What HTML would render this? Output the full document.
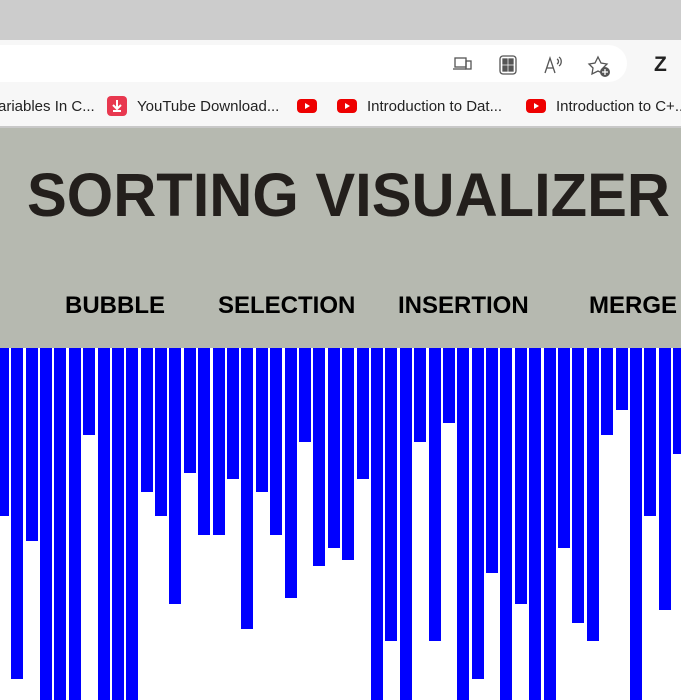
<!DOCTYPE html>
<html><head><style>
*{margin:0;padding:0;box-sizing:border-box}
body{width:681px;height:681px;overflow:hidden;background:#fff;position:relative;font-family:"Liberation Sans",Arial,sans-serif}
.a{position:absolute}
.bar{position:absolute;top:348px;width:12px;background:#0000ff}
.bm{position:absolute;top:98px;font-size:15px;color:#222;white-space:nowrap}
.yt{position:absolute;top:99px;width:20px;height:14px;background:#e00;border-radius:4px}
.yt:after{content:"";position:absolute;left:8px;top:4px;border-left:5px solid #fff;border-top:3px solid transparent;border-bottom:3px solid transparent}
.btn{position:absolute;top:292px;font-size:24px;font-weight:bold;color:#000;white-space:nowrap}
</style></head><body>
<div class="a" style="left:0;top:0;width:681px;height:40px;background:#cccccc"></div>
<div class="a" style="left:0;top:40px;width:681px;height:87px;background:#f7f7f7"></div>
<div class="a" style="left:-30px;top:45px;width:657px;height:37px;background:#fff;border-radius:19px"></div>
<svg class="a" style="left:452px;top:54px" width="160" height="24" viewBox="0 0 160 24">
 <g fill="none" stroke="#555" stroke-width="1.3">
  <rect x="3" y="4" width="11" height="9"/><path d="M1 15h13"/><rect x="14" y="7" width="5" height="8"/>
  <rect x="48" y="2" width="16" height="18" rx="3"/><rect x="51" y="5" width="4" height="5" fill="#555"/><rect x="57" y="5" width="4" height="5" fill="#555"/><rect x="51" y="12" width="4" height="5" fill="#555"/><rect x="57" y="12" width="4" height="5" fill="#555"/>
  <path d="M93 19l5-15l5 15M95 14h6M105 5c2 1 2 4 0 5M107 3c3 2 3 7 0 9"/>
  <path d="M146 3l3 6l6 1l-4 4l1 6l-6-3l-6 3l1-6l-4-4l6-1z"/>
 </g>
 <circle cx="153" cy="18" r="5" fill="#555"/><path d="M153 15v6M150 18h6" stroke="#fff" stroke-width="1.3"/>
</svg>
<div class="a" style="left:654px;top:53px;font-size:21px;font-weight:bold;color:#222">Z</div>
<div class="bm" style="left:-2px">ariables In C...</div>
<div class="a" style="left:107px;top:96px;width:20px;height:20px;background:#e8384f;border-radius:4px"></div>
<svg class="a" style="left:107px;top:96px" width="20" height="20"><path d="M10 4v8M6 9l4 4l4-4M6 15h8" stroke="#fff" stroke-width="2" fill="none"/></svg>
<div class="bm" style="left:137px">YouTube Download...</div>
<div class="yt" style="left:297px"></div>
<div class="yt" style="left:337px"></div>
<div class="bm" style="left:367px">Introduction to Dat...</div>
<div class="yt" style="left:526px"></div>
<div class="bm" style="left:556px">Introduction to C+...</div>
<div class="a" style="left:0;top:126px;width:681px;height:2px;background:#c8c8c8"></div>
<div class="a" style="left:0;top:128px;width:681px;height:220px;background:#b6b9b0"></div>
<svg class="a" style="left:0;top:150px" width="681" height="80"><text x="27" y="66" font-family="Liberation Sans,Arial,sans-serif" font-weight="bold" font-size="61" fill="#231f1c" textLength="643" lengthAdjust="spacingAndGlyphs">SORTING VISUALIZER</text></svg>
<div class="btn" style="left:65px">BUBBLE</div>
<div class="btn" style="left:218px">SELECTION</div>
<div class="btn" style="left:398px">INSERTION</div>
<div class="btn" style="left:589px">MERGE</div>
<div id="bars"></div>
<script>
var b=[516,679,541,700,700,700,435,700,700,700,492,516,604,473,535,535,479,629,492,535,598,442,566,548,560,479,700,641,700,442,641,423,700,679,573,700,604,700,700,548,623,641,435,410,700,516,610,454];
var h="";for(var i=0;i<b.length;i++){var l=Math.round(-3.2+14.39*i);h+='<div class="bar" style="left:'+l+'px;height:'+(b[i]-348)+'px"></div>';}
document.getElementById("bars").innerHTML=h;
</script>
</body></html>
